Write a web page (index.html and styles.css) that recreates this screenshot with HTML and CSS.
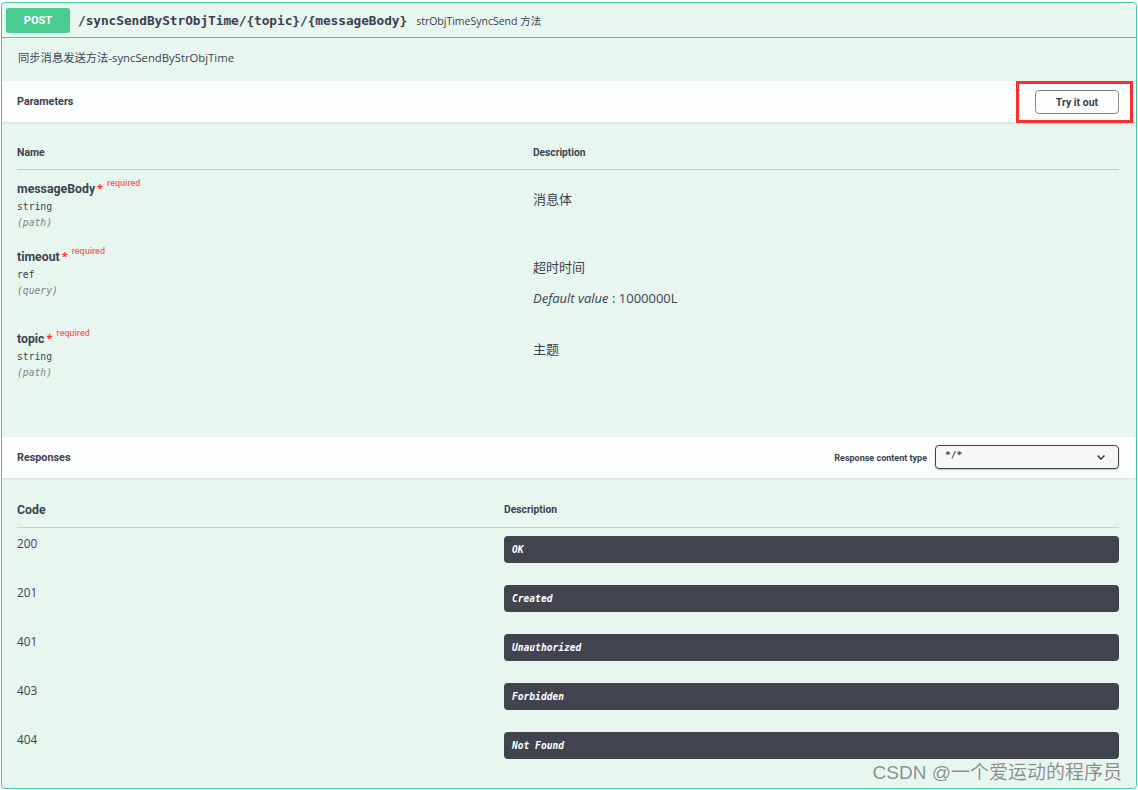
FILE: index.html
```html
<!DOCTYPE html>
<html>
<head>
<meta charset="utf-8">
<link rel="stylesheet" href="styles.css">
</head>
<body>
<div class="opblock">
  <div class="summary">
    <span class="method">POST</span>
    <span class="path">/syncSendByStrObjTime/{topic}/{messageBody}</span>
    <span class="summary-desc">strObjTimeSyncSend 方法</span>
  </div>
  <div class="op-desc">同步消息发送方法-syncSendByStrObjTime</div>

  <div class="section-header">
    <span class="section-title">Parameters</span>
    <div class="try-wrap">
      <button class="try-btn">Try it out</button>
      <span class="highlight"></span>
    </div>
  </div>

  <div class="params">
    <div class="param-head">
      <span>Name</span>
      <span class="ph-desc">Description</span>
    </div>
    <div class="param-row">
      <div class="p-name">
        <div class="pn"><span class="pn-text">messageBody</span><span class="star">*</span><span class="req">required</span></div>
        <div class="ptype">string</div>
        <div class="pin">(path)</div>
      </div>
      <div class="p-desc">
        <p>消息体</p>
      </div>
    </div>
    <div class="param-row">
      <div class="p-name">
        <div class="pn"><span class="pn-text">timeout</span><span class="star">*</span><span class="req">required</span></div>
        <div class="ptype">ref</div>
        <div class="pin">(query)</div>
      </div>
      <div class="p-desc">
        <p>超时时间</p>
        <p class="default"><i>Default value</i> : 1000000L</p>
      </div>
    </div>
    <div class="param-row">
      <div class="p-name">
        <div class="pn"><span class="pn-text">topic</span><span class="star">*</span><span class="req">required</span></div>
        <div class="ptype">string</div>
        <div class="pin">(path)</div>
      </div>
      <div class="p-desc">
        <p>主题</p>
      </div>
    </div>
  </div>

  <div class="section-header resp-header">
    <span class="section-title">Responses</span>
    <div class="ctype">
      <span class="ctype-label">Response content type</span>
      <div class="select"><span>*/*</span>
        <svg width="10" height="7" viewBox="0 0 10 7"><path d="M1.5 1.5 L5 5 L8.5 1.5" fill="none" stroke="#3b4151" stroke-width="1.6"/></svg>
      </div>
    </div>
  </div>

  <div class="responses">
    <div class="resp-head">
      <span class="rh-code">Code</span>
      <span class="rh-desc">Description</span>
    </div>
    <div class="resp-row"><span class="code">200</span><div class="rbox">OK</div></div>
    <div class="resp-row"><span class="code">201</span><div class="rbox">Created</div></div>
    <div class="resp-row"><span class="code">401</span><div class="rbox">Unauthorized</div></div>
    <div class="resp-row"><span class="code">403</span><div class="rbox">Forbidden</div></div>
    <div class="resp-row"><span class="code">404</span><div class="rbox">Not Found</div></div>
  </div>
  <div class="watermark">CSDN @一个爱运动的程序员</div>
</div>
</body>
</html>
```

FILE: styles.css
```css
* { box-sizing: border-box; }
html, body { margin: 0; padding: 0; background: #ffffff; }
body {
  font-family: "Open Sans", "Noto Sans CJK SC", sans-serif;
  color: #3b4151;
  padding: 2px 1px 0 1px;
}
.opblock {
  position: relative;
  width: 1136px;
  height: 787px;
  border: 1px solid #49cc90;
  border-radius: 4px;
  background: #e8f6f0;
}
.summary {
  height: 35px;
  display: flex;
  align-items: center;
  padding: 0 4px;
  border-bottom: 1px solid #49cc90;
}
.method {
  width: 64px;
  height: 25px;
  background: #49cc90;
  border-radius: 3px;
  color: #fff;
  font-family: "Roboto", sans-serif;
  font-weight: 700;
  font-size: 11px;
  display: flex;
  align-items: center;
  justify-content: center;
  margin-right: 8px;
}
.path {
  font-family: "DejaVu Sans Mono", monospace;
  font-weight: 700;
  font-size: 12.8px;
  letter-spacing: -0.05px;
  color: #3b4151;
  margin-right: 9px;
}
.summary-desc {
  font-size: 10.5px;
  color: #3b4151;
}
.op-desc {
  height: 43px;
  padding: 12px 16px 0 16px;
  font-size: 11.3px;
  line-height: 16px;
}
.section-header {
  height: 41px;
  background: rgba(255,255,255,0.85);
  box-shadow: 0 1px 2px rgba(0,0,0,0.1);
  display: flex;
  align-items: center;
  justify-content: space-between;
  padding: 0 17px 0 15px;
}
.section-title {
  font-family: "Roboto", sans-serif;
  font-weight: 700;
  font-size: 10.8px;
  color: #3b4151;
}
.try-wrap {
  position: relative;
  display: flex;
}
.try-btn {
  width: 84px;
  height: 24px;
  border: 1px solid #888;
  border-radius: 4px;
  background: transparent;
  font-family: "Roboto", sans-serif;
  font-weight: 700;
  font-size: 10.5px;
  color: #3b4151;
  padding: 0;
  margin-top: 1px;
}
.highlight {
  position: absolute;
  left: -19px;
  top: -8px;
  width: 117px;
  height: 42px;
  border: 3px solid #ff2d2d;
}
.params {
  padding: 20px 17px 49px 15px;
}
.param-head {
  display: grid;
  grid-template-columns: 516px 1fr;
  height: 28px;
  padding-top: 4px;
  border-bottom: 1px solid #c5d0ce;
  font-family: "Roboto", sans-serif;
  font-weight: 700;
  font-size: 10.5px;
  line-height: 14px;
}
.ph-desc { font-size: 10.2px; }
.param-row {
  display: grid;
  grid-template-columns: 516px 1fr;
  align-items: start;
}
.p-name {
  padding: 10px 0 7px 0;
}
.pn {
  height: 16px;
  line-height: 16px;
  display: flex;
  align-items: flex-start;
}
.pn-text {
  font-family: "Roboto", sans-serif;
  font-weight: 700;
  font-size: 12.3px;
  line-height: 18px;
  margin-top: 0;
}
.star {
  color: #ff3333;
  font-size: 11px;
  font-weight: 700;
  margin: 0 4px 0 2px;
  line-height: 16px;
}
.req {
  color: #ff6060;
  font-family: "Roboto", sans-serif;
  font-size: 9px;
  font-weight: 500;
  line-height: 10px;
  margin-top: -2px;
}
.ptype {
  margin-top: 3px;
  font-family: "DejaVu Sans Mono", monospace;
  font-size: 9.7px;
  line-height: 16px;
}
.pin {
  font-family: "DejaVu Sans Mono", monospace;
  font-style: italic;
  font-size: 9.7px;
  line-height: 16px;
  color: #808080;
}
.p-desc {
  padding: 21px 0 14px 0;
}
.p-desc p {
  margin: 0;
  font-size: 13px;
  line-height: 16px;
}
.p-desc p.default {
  margin-top: 15px;
}
.resp-header {
  height: 41px;
}
.ctype {
  display: flex;
  align-items: center;
}
.ctype-label {
  font-family: "Roboto", sans-serif;
  font-weight: 700;
  font-size: 9px;
  margin-right: 8px;
}
.select {
  width: 184px;
  height: 24px;
  border: 1px solid #41444e;
  border-radius: 4px;
  background: #f7f7f7;
  box-shadow: 0 1px 2px rgba(0,0,0,0.25);
  display: flex;
  align-items: center;
  justify-content: space-between;
  padding: 0 12px 0 9px;
  font-family: "DejaVu Sans Mono", monospace;
  font-weight: 700;
  font-size: 9.5px;
  margin-top: -1px;
}
.select span { margin-top: -6px; }
.responses {
  padding: 20px 17px 0 15px;
}
.resp-head {
  display: flex;
  height: 30px;
  padding-top: 4px;
  border-bottom: 1px solid #c5d0ce;
  font-family: "Roboto", sans-serif;
  font-weight: 700;
  line-height: 16px;
}
.rh-code {
  width: 487px;
  font-size: 12.3px;
}
.rh-desc {
  font-size: 10.3px;
}
.resp-row {
  display: flex;
  height: 49px;
  padding-top: 8px;
  align-items: flex-start;
}
.code {
  width: 487px;
  font-size: 11.8px;
  line-height: 14px;
}
.rbox {
  flex: 1;
  height: 27px;
  background: #41444e;
  border-radius: 4px;
  color: #ffffff;
  font-family: "DejaVu Sans Mono", monospace;
  font-weight: 700;
  font-style: italic;
  font-size: 9.6px;
  line-height: 27px;
  padding-left: 8px;
}
.watermark {
  position: absolute;
  right: 14px;
  bottom: 4px;
  font-family: "Liberation Sans", "Noto Sans CJK SC", sans-serif;
  font-size: 19px;
  color: rgba(120,120,120,0.85);
  text-shadow: 0 0 1px #fff;
}
```
